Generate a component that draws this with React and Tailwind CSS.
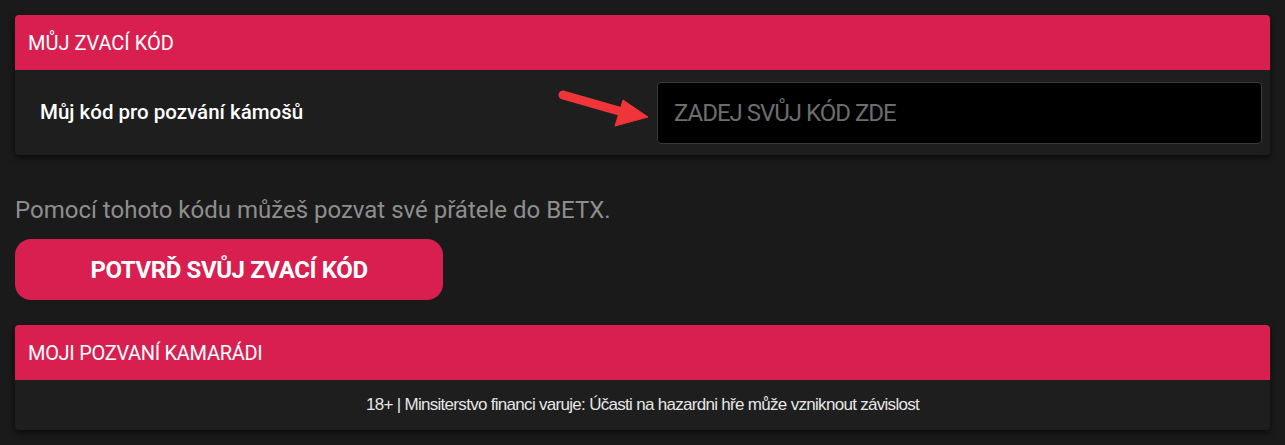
const PINK = 'bg-[#d81f50]';

function Arrow() {
  return (
    <svg className="w-[96px] h-[50px] flex-shrink-0" viewBox="0 0 96 50" fill="none">
      <path d="M8 5 L64 21" stroke="#f0353a" strokeWidth="9" strokeLinecap="round" />
      <path d="M68 10 L93 27 L60 36 Z" fill="#f0353a" strokeLinejoin="round" stroke="#f0353a" strokeWidth="1" />
    </svg>
  );
}

function CardHeader({ children }) {
  return (
    <div className={`${PINK} h-[55px] flex items-center px-[13px] text-white text-[20px] rounded-t-[4px]`}>
      {children}
    </div>
  );
}

export default function App() {
  return (
    <div className="min-h-[445px] bg-[#1b1a1b] px-[15px] pt-[15px] pb-[15px]" style={{ fontFamily: 'Roboto, "Noto Sans", sans-serif' }}>
      <div className="bg-[#1e1e1e] rounded-[4px] shadow-[0_3px_6px_rgba(0,0,0,0.6)]">
        <CardHeader>MŮJ ZVACÍ KÓD</CardHeader>
        <div className="h-[85px] flex items-center pl-[25px] pr-[8px]">
          <span className="text-white text-[20.5px] font-medium flex-1">Můj kód pro pozvání kámošů</span>
          <div className="mr-[6px] mt-[4px]">
            <Arrow />
          </div>
          <div className="w-[605px] h-[62px] bg-black border border-[#3a3a3a] rounded-[4px] flex items-center px-[16px]">
            <span className="text-[#6d6d6d] text-[24px] tracking-[-1px]">ZADEJ SVŮJ KÓD ZDE</span>
          </div>
        </div>
      </div>

      <p className="mt-[40px] text-[#8e8e8e] text-[24px] leading-[30px]">
        Pomocí tohoto kódu můžeš pozvat své přátele do BETX.
      </p>

      <button className={`${PINK} mt-[14px] w-[428px] h-[61px] rounded-[16px] text-white text-[24px] font-bold tracking-[-0.4px] flex items-center justify-center`}>
        POTVRĎ SVŮJ ZVACÍ KÓD
      </button>

      <div className="mt-[25px] bg-[#1e1e1e] rounded-[4px] shadow-[0_3px_6px_rgba(0,0,0,0.6)]">
        <CardHeader>
          <span className="tracking-[-0.3px]">MOJI POZVANÍ KAMARÁDI</span>
        </CardHeader>
        <div className="h-[50px] flex items-center justify-center">
          <span
            className="text-[#e6e6e6] text-[17px] tracking-[-0.7px]"
            style={{ fontFamily: '"Liberation Sans Narrow", "Liberation Sans", sans-serif' }}
          >
            18+ | Minsiterstvo financi varuje: Účasti na hazardni hře může vzniknout závislost
          </span>
        </div>
      </div>
    </div>
  );
}
